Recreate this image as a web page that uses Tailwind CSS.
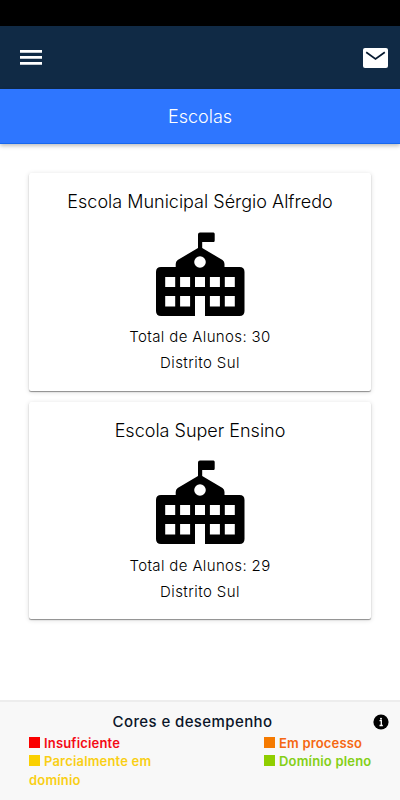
<!DOCTYPE html>
<html lang="pt-BR">
<head>
<meta charset="utf-8">
<meta name="viewport" content="width=device-width, initial-scale=1">
<title>Escolas</title>
<script src="https://cdn.jsdelivr.net/npm/@tailwindcss/browser@4"></script>
</head>
<body class="bg-white font-['Inter',sans-serif] text-black">
<svg class="hidden">
  <symbol id="school" viewBox="0 0 90 86">
    <path fill-rule="evenodd" d="M43 17V3.500Q43 1.500 45 1.500H58.500Q59.700 1.500 59.700 3V9.500Q59.700 11 58.500 11H47.200V17L67.500 29Q69.500 30.500 69.500 33V36H84.500Q89.500 36 89.500 41V80Q89.500 85 84.500 85H50V65H40V85H6Q1 85 1 80V41Q1 36 6 36H20.700V33Q20.700 30.500 22.700 29ZM45 25.200A5.800 5.800 0 1 0 45 36.800A5.800 5.800 0 1 0 45 25.200ZM10.200 46V56H20.200V46ZM25.100 46V56H35.100V46ZM40 46V56H50V46ZM54.900 46V56H64.900V46ZM69.800 46V56H79.800V46ZM10.200 65V75.500H20.200V65ZM25.100 65V75.500H35.100V65ZM54.900 65V75.500H64.900V65ZM69.800 65V75.500H79.800V65Z"/>
  </symbol>
</svg>
<div class="flex h-[800px] w-[400px] flex-col overflow-hidden">
  <div class="h-[26px] shrink-0 bg-black"></div>
  <header class="flex h-[63px] shrink-0 items-center justify-between bg-[#102a45] pr-3 pl-5">
    <button aria-label="Menu"><svg class="block h-[15px] w-[22px] fill-white" viewBox="0 0 22 15"><path d="M0 0H22V2.700H0ZM0 6.100H22V8.700H0ZM0 12H22V14.700H0Z"/></svg></button>
    <button aria-label="Mensagens"><svg class="block h-5 w-[25px]" viewBox="0 0 25 20"><rect width="25" height="20" rx="2" fill="#fff"/><path d="M3.200 4.300L12.500 11L21.800 4.300" fill="none" stroke="#071a30" stroke-width="1.700"/></svg></button>
  </header>
  <div class="flex h-[55px] shrink-0 items-center justify-center border-b border-[#1767ee] bg-[#2e76ff] pt-px text-[18px] font-light text-white shadow-[0_2px_4px_rgba(0,0,0,0.25)]">Escolas</div>
  <main class="flex flex-1 flex-col gap-[11px] px-[29px] pt-[29px]">
    <section class="flex h-[217.500px] flex-col items-center rounded-[2px] bg-white pt-[15px] shadow-[0_1px_1px_rgba(0,0,0,0.4),0_1px_5px_rgba(0,0,0,0.15)]">
      <h2 class="text-[18px] leading-[27px] font-light">Escola Municipal Sérgio Alfredo</h2>
      <svg class="mt-4 h-[86px] w-[90px]"><use href="#school"/></svg>
      <p class="mt-[7px] text-[15px] leading-[26px] font-light tracking-[0.36px]">Total de Alunos: 30</p>
      <p class="text-[15px] leading-[26px] font-light tracking-[0.42px]">Distrito Sul</p>
    </section>
    <section class="flex h-[217.500px] flex-col items-center rounded-[2px] bg-white pt-[15px] shadow-[0_1px_1px_rgba(0,0,0,0.4),0_1px_5px_rgba(0,0,0,0.15)]">
      <h2 class="text-[18px] leading-[27px] font-light">Escola Super Ensino</h2>
      <svg class="mt-[15.500px] h-[86px] w-[90px]"><use href="#school"/></svg>
      <p class="mt-[7.500px] text-[15px] leading-[26px] font-light tracking-[0.36px]">Total de Alunos: 29</p>
      <p class="text-[15px] leading-[26px] font-light tracking-[0.42px]">Distrito Sul</p>
    </section>
  </main>
  <footer class="h-[100px] shrink-0 border-t-2 border-[#ededed] bg-[#f8f8f8] px-[29px] pt-[9px]">
    <div class="relative text-center text-[15px] leading-[22px] font-medium tracking-[0.4px] text-[#0b1529]">
      <span class="relative -left-[7.500px]">Cores e desempenho</span>
      <svg class="absolute top-[2.500px] -right-[18px] size-4" viewBox="0 0 16 16"><circle cx="8" cy="8" r="7.600" fill="#000"/><circle cx="8" cy="4.700" r="1" fill="#fff"/><path d="M6.500 6.700H8.300V11.500M6.500 11.500H9.800" fill="none" stroke="#fff" stroke-width="1.300"/></svg>
    </div>
    <div class="flex justify-between pt-[0.500px] text-[13px] leading-[18.500px] font-semibold tracking-[0.18px]">
      <div class="w-[140px]">
        <div class="text-[#f40a15]"><span class="mr-1 inline-block size-[11px] bg-[#fa0000]"></span>Insuficiente</div>
        <div class="text-[#f9cf16]"><span class="mr-1 inline-block size-[11px] bg-[#fad000]"></span>Parcialmente em domínio</div>
      </div>
      <div class="w-[107px] whitespace-nowrap">
        <div class="text-[#f56712]"><span class="mr-1 inline-block size-[11px] bg-[#f57a00]"></span>Em processo</div>
        <div class="text-[#84cf16]"><span class="mr-1 inline-block size-[11px] bg-[#8fce00]"></span>Domínio pleno</div>
      </div>
    </div>
  </footer>
</div>
</body>
</html>
